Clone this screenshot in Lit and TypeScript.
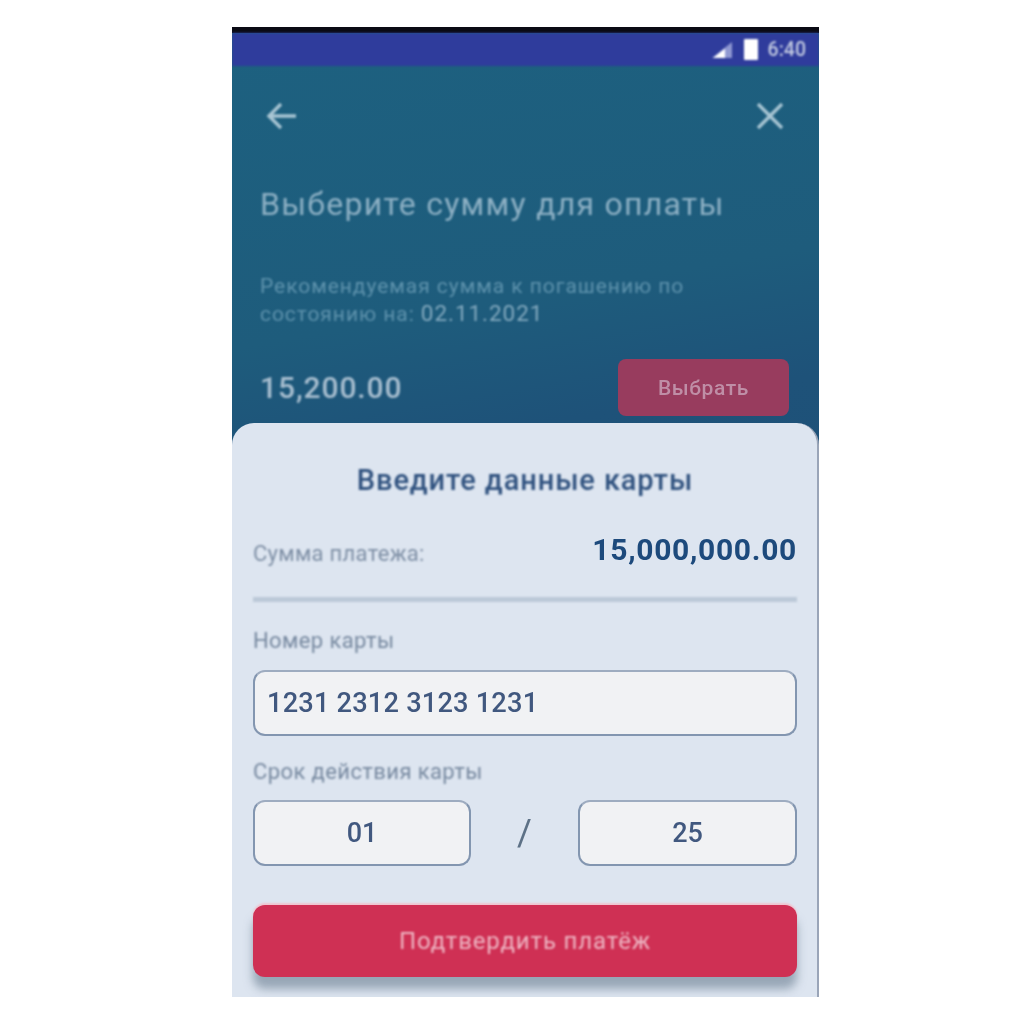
import { LitElement, html, css } from "lit";
import { customElement } from "lit/decorators.js";

@customElement("app-root")
export class AppRoot extends LitElement {
  static styles = css`
    :host { display: block; width: 1024px; height: 1024px; background: #fff; padding: 27px 0 0 232px; box-sizing: border-box; font-family: Roboto, "Noto Sans", sans-serif; overflow: hidden; }
    .phone { width: 587px; height: 970px; display: flex; flex-direction: column; background: linear-gradient(170deg, #1d6180 0%, #1e5c7c 30%, #1e5279 42%, #1b4a76 100%); overflow: hidden; }
    .notch { height: 6px; background: #0a0a14; flex: none; }
    .status { height: 33px; flex: none; background: #2f3c9c; display: flex; align-items: center; justify-content: flex-end; padding-right: 13px; color: #c3cbe2; font-size: 19.5px; font-weight: 500; filter: blur(.8px); }
    .status svg { display: block; }
    .status .sig { margin-right: 12px; }
    .status .bat { margin-right: 10px; }
    .nav { height: 100px; flex: none; display: flex; align-items: center; justify-content: space-between; padding: 0 35px 0 34px; filter: blur(.8px); }
    .nav svg { display: block; }
    .title { margin: 0 0 0 28px; height: 76px; flex: none; font-size: 32px; font-weight: 400; line-height: 76px; color: #8db0c4; letter-spacing: 1.25px; white-space: nowrap; filter: blur(.9px); }
    .desc { margin: 31px 0 0 28px; flex: none; font-size: 21px; line-height: 27px; color: #5f93ad; letter-spacing: .95px; filter: blur(1px); }
    .desc b { font-weight: 400; font-size: 22.5px; color: #84aabf; }
    .choose { margin-top: 31px; height: 57px; flex: none; padding: 0 30px 0 28px; display: flex; align-items: center; justify-content: space-between; }
    .sum { font-size: 30px; font-weight: 500; color: #a9bfd0; letter-spacing: .9px; filter: blur(.9px); }
    .pick { width: 171px; height: 57px; border-radius: 8px; background: #983c5e; display: flex; align-items: center; justify-content: center; filter: blur(.6px); }
    .pick span { color: #bf8ea6; font-size: 21px; font-weight: 500; letter-spacing: .6px; filter: blur(.5px); }
    .sheet { margin-top: 7px; flex: 1; box-sizing: border-box; background: #dde5f0; border-right: 2px solid #9aa5b8; border-radius: 22px 22px 0 0; padding: 0 20px 0 21px; overflow: hidden; display: flex; flex-direction: column; }
    .sheet-title { height: 114px; flex: none; line-height: 114px; text-align: center; font-size: 29px; font-weight: 500; color: #30527f; letter-spacing: .9px; white-space: nowrap; filter: blur(.8px); }
    .total { height: 26px; margin-top: -1px; flex: none; display: flex; align-items: center; justify-content: space-between; }
    .total span { font-size: 22px; letter-spacing: .3px; color: #7d8ea4; filter: blur(.9px); position: relative; top: 4px; }
    .total strong { font-size: 30px; font-weight: 700; color: #1d4a7c; letter-spacing: .7px; filter: blur(.6px); position: relative; }
    .rule { height: 5px; flex: none; margin-top: 35px; background: #bcc9d8; filter: blur(.8px); }
    .label { flex: none; font-size: 22px; letter-spacing: .4px; color: #76889f; line-height: 24px; filter: blur(.9px); white-space: nowrap; }
    .label.a { margin-top: 27px; }
    .label.b { margin-top: 24px; }
    .field { box-sizing: border-box; height: 66px; border: 2px solid #8396b0; border-top-color: #9eacc0; border-radius: 12px; background: #f1f2f4; color: #41587f; font-weight: 500; display: flex; align-items: center; filter: blur(.6px); }
    .field.card { margin-top: 17px; flex: none; padding-left: 12px; letter-spacing: .2px; font-size: 27.2px; }
    .expiry { margin-top: 16px; flex: none; display: grid; grid-template-columns: 218px 1fr 219px; align-items: center; }
    .field.small { justify-content: center; font-size: 27px; }
    .slash { text-align: center; font-size: 36px; font-weight: 400; color: #5d7186; filter: blur(.7px); }
    .confirm { margin-top: 39px; flex: none; height: 72px; border-radius: 12px; background: #cf3054; box-shadow: 0 12px 10px rgba(95, 115, 135, .55), 0 -2px 2px #f0c4cf; display: flex; align-items: center; justify-content: center; color: #eeb7c4; font-size: 24px; font-weight: 400; letter-spacing: .85px; }
    .confirm span { filter: blur(.8px); }
  `;

  render() {
    return html`
      <div class="phone">
        <div class="notch"></div>
        <div class="status">
          <svg class="sig" width="20" height="18" viewBox="0 0 20 18"><path d="M0 17 L20 1 V17 Z" fill="#8f98d2"/><path d="M1 17 L13 7.5 V17 Z" fill="#fff"/></svg>
          <svg class="bat" width="14" height="21" viewBox="0 0 14 21"><rect width="14" height="21" rx="1" fill="#fff"/></svg>
          <span>6:40</span>
        </div>
        <div class="nav">
          <svg width="30" height="30" viewBox="0 0 30 30" fill="none" stroke="#a9c6d4" stroke-width="3.4"><path d="M30 15 H4 M15 3 L3 15 L15 27"/></svg>
          <svg width="28" height="28" viewBox="0 0 28 28" fill="none" stroke="#a9c6d4" stroke-width="3.4"><path d="M2 2 L26 26 M26 2 L2 26"/></svg>
        </div>
        <h1 class="title">Выберите сумму для оплаты</h1>
        <div class="desc">Рекомендуемая сумма к погашению по<br />состоянию на: <b>02.11.2021</b></div>
        <div class="choose">
          <span class="sum">15,200.00</span>
          <div class="pick"><span>Выбрать</span></div>
        </div>
        <div class="sheet">
          <div class="sheet-title">Введите данные карты</div>
          <div class="total"><span>Сумма платежа:</span><strong>15,000,000.00</strong></div>
          <div class="rule"></div>
          <div class="label a">Номер карты</div>
          <div class="field card">1231 2312 3123 1231</div>
          <div class="label b">Срок действия карты</div>
          <div class="expiry">
            <div class="field small">01</div>
            <div class="slash">/</div>
            <div class="field small">25</div>
          </div>
          <div class="confirm"><span>Подтвердить платёж</span></div>
        </div>
      </div>
    `;
  }
}
